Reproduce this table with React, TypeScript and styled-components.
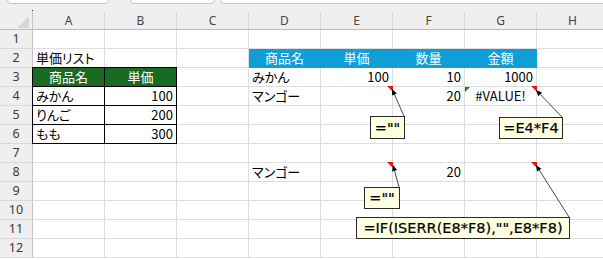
import React from 'react';
import styled, { createGlobalStyle } from 'styled-components';

const GlobalStyle = createGlobalStyle`
  html, body {
    margin: 0;
    padding: 0;
    background: #ffffff;
  }
  body {
    width: 603px;
    height: 260px;
    overflow: hidden;
    font-family: "Noto Sans CJK JP", sans-serif;
  }
`;

const GRID = '#dedede';
const HEAD_LINE = '#c6c6c6';
const HEAD_BG = '#efefef';

const Window = styled.div`
  position: relative;
  width: 603px;
  height: 260px;
  overflow: hidden;
  background: #ffffff;
`;

const TopStrip = styled.div`
  display: flex;
  height: 4px;
  background: ${HEAD_BG};
  overflow: hidden;
`;

const BarBox = styled.div<{ $w: number; $ml: number }>`
  flex: none;
  width: ${(p) => p.$w}px;
  height: 12px;
  margin-top: -8px;
  margin-left: ${(p) => p.$ml}px;
  box-sizing: border-box;
  border: 1px solid #c4c4c4;
  border-radius: 4px;
  background: #ffffff;
`;

const HeaderBar = styled.div`
  display: flex;
  align-items: flex-end;
  height: 26px;
  box-sizing: border-box;
  background: ${HEAD_BG};
  border-bottom: 1px solid #b9b9b9;
`;

const Corner = styled.div`
  position: relative;
  flex: none;
  width: 33px;
  height: 17px;
  box-sizing: border-box;
  border-right: 1px solid ${HEAD_LINE};
  display: flex;
  justify-content: flex-end;
  align-items: flex-end;
  padding: 0 3px 1px 0;

  &::before {
    content: '';
    position: absolute;
    right: -1px;
    top: -2px;
    width: 1px;
    height: 1px;
    background: #222;
  }
`;

const CornerMark = styled.div`
  width: 0;
  height: 0;
  border-left: 12px solid transparent;
  border-bottom: 12px solid #d6d6d6;
`;

const ColHead = styled.div`
  flex: none;
  width: 72px;
  height: 17px;
  box-sizing: border-box;
  border-right: 1px solid #d8d8d8;
  text-align: center;
  font-family: "Noto Sans", sans-serif;
  font-size: 12px;
  line-height: 17px;
  color: #444444;
`;

const SheetRow = styled.div`
  display: flex;
  height: 19px;
`;

const RowHead = styled.div`
  flex: none;
  width: 33px;
  height: 19px;
  box-sizing: border-box;
  background: ${HEAD_BG};
  border-right: 1px solid ${HEAD_LINE};
  border-bottom: 1px solid #d9d9d9;
  text-align: center;
  font-family: "Noto Sans", sans-serif;
  font-size: 12.5px;
  line-height: 18px;
  color: #3a3a3a;
`;

type Align = 'left' | 'center' | 'right';

const Cell = styled.div<{
  $align: Align;
  $fill?: string;
  $ink?: string;
  $boxed?: boolean;
  $note?: boolean;
  $err?: boolean;
}>`
  position: relative;
  flex: none;
  width: 72px;
  height: 19px;
  box-sizing: border-box;
  padding: 0 3px;
  border-right: 1px solid ${(p) => (p.$boxed ? '#000' : p.$fill ?? GRID)};
  border-bottom: 1px solid ${(p) => (p.$boxed ? '#000' : p.$fill ?? GRID)};
  box-shadow: ${(p) =>
    p.$boxed ? '-1px 0 0 #000, 0 -1px 0 #000, -1px -1px 0 #000' : 'none'};
  background: ${(p) => p.$fill ?? 'transparent'};
  color: ${(p) => p.$ink ?? '#000000'};
  text-align: ${(p) => p.$align};
  font-size: 13px;
  line-height: 18px;
  font-feature-settings: "palt";
  white-space: nowrap;

  &::before {
    content: '';
    display: ${(p) => (p.$err ? 'block' : 'none')};
    position: absolute;
    left: 0;
    top: 0;
    width: 0;
    height: 0;
    border-top: 5px solid #1d7f25;
    border-right: 5px solid transparent;
  }

  &::after {
    content: '';
    display: ${(p) => (p.$note ? 'block' : 'none')};
    position: absolute;
    right: -1px;
    top: -1px;
    width: 0;
    height: 0;
    border-top: 6px solid #e8120c;
    border-left: 6px solid transparent;
  }
`;

const NoteBox = styled.div<{ $x: number; $y: number; $w: number; $h: number }>`
  position: absolute;
  left: ${(p) => p.$x}px;
  top: ${(p) => p.$y}px;
  width: ${(p) => p.$w}px;
  height: ${(p) => p.$h}px;
  box-sizing: border-box;
  border: 1px solid #2a2a2a;
  background: #ffffe1;
  display: flex;
  align-items: center;
  justify-content: center;
  font-family: "DejaVu Sans", sans-serif;
  font-size: 14.5px;
  color: #000;
  -webkit-text-stroke: 0.2px #000;
  white-space: nowrap;
`;

const Leaders = styled.svg`
  position: absolute;
  left: 0;
  top: 0;
  width: 603px;
  height: 260px;
  pointer-events: none;
`;

type Spec = {
  t?: string;
  align?: Align;
  fill?: string;
  ink?: string;
  boxed?: boolean;
  note?: boolean;
  err?: boolean;
};

const GREEN = '#196b24';
const BLUE = '#0f9ed5';

const head = (t: string, fill: string, boxed = false): Spec => ({
  t,
  align: 'center',
  fill,
  ink: '#ffffff',
  boxed,
});
const num = (t: string, boxed = false): Spec => ({ t, align: 'right', boxed });
const txt = (t: string, boxed = false): Spec => ({ t, boxed });

const columns = ['A', 'B', 'C', 'D', 'E', 'F', 'G', 'H'];

const rows: Record<number, Record<string, Spec>> = {
  2: {
    A: txt('単価リスト'),
    D: head('商品名', BLUE),
    E: head('単価', BLUE),
    F: head('数量', BLUE),
    G: head('金額', BLUE),
  },
  3: {
    A: head('商品名', GREEN, true),
    B: head('単価', GREEN, true),
    D: txt('みかん'),
    E: num('100'),
    F: num('10'),
    G: num('1000'),
  },
  4: {
    A: txt('みかん', true),
    B: num('100', true),
    D: txt('マンゴー'),
    E: { note: true },
    F: num('20'),
    G: { t: '#VALUE!', align: 'center', err: true, note: true },
  },
  5: { A: txt('りんご', true), B: num('200', true) },
  6: { A: txt('もも', true), B: num('300', true) },
  8: {
    D: txt('マンゴー'),
    E: { note: true },
    F: num('20'),
    G: { note: true },
  },
};

const notes = [
  { x: 370, y: 116, w: 35, h: 23, text: '=""' },
  { x: 499, y: 117, w: 64, h: 22, text: '=E4*F4' },
  { x: 364, y: 187, w: 36, h: 22, text: '=""' },
  { x: 356, y: 217, w: 214, h: 22, text: '=IF(ISERR(E8*F8),"",E8*F8)' },
];

const leaders = [
  { x1: 404, y1: 116, x2: 392, y2: 89 },
  { x1: 562, y1: 117, x2: 536, y2: 90 },
  { x1: 399, y1: 187, x2: 393, y2: 165 },
  { x1: 569, y1: 217, x2: 536, y2: 165 },
];

function Leader({ x1, y1, x2, y2 }: { x1: number; y1: number; x2: number; y2: number }) {
  const dx = x2 - x1;
  const dy = y2 - y1;
  const len = Math.hypot(dx, dy);
  const ux = dx / len;
  const uy = dy / len;
  const bx = x2 - ux * 6;
  const by = y2 - uy * 6;
  const pts = [
    `${x2},${y2}`,
    `${bx - uy * 2.6},${by + ux * 2.6}`,
    `${bx + uy * 2.6},${by - ux * 2.6}`,
  ].join(' ');
  return (
    <g>
      <line x1={x1} y1={y1} x2={bx} y2={by} stroke="#4a4a4a" strokeWidth="1" />
      <polygon points={pts} fill="#000" />
    </g>
  );
}

export default function App() {
  return (
    <Window>
      <GlobalStyle />
      <TopStrip>
        <BarBox $w={102} $ml={7} />
        <BarBox $w={85} $ml={21} />
        <BarBox $w={420} $ml={5} />
      </TopStrip>
      <HeaderBar>
        <Corner>
          <CornerMark />
        </Corner>
        {columns.map((c) => (
          <ColHead key={c}>{c}</ColHead>
        ))}
      </HeaderBar>
      {Array.from({ length: 12 }, (_, i) => i + 1).map((r) => (
        <SheetRow key={r}>
          <RowHead>{r}</RowHead>
          {columns.map((c) => {
            const s = rows[r]?.[c] ?? {};
            return (
              <Cell
                key={c}
                $align={s.align ?? 'left'}
                $fill={s.fill}
                $ink={s.ink}
                $boxed={s.boxed}
                $note={s.note}
                $err={s.err}
              >
                {s.t}
              </Cell>
            );
          })}
        </SheetRow>
      ))}
      <Leaders viewBox="0 0 603 260">
        {leaders.map((l, i) => (
          <Leader key={i} {...l} />
        ))}
      </Leaders>
      {notes.map((n, i) => (
        <NoteBox key={i} $x={n.x} $y={n.y} $w={n.w} $h={n.h}>
          {n.text}
        </NoteBox>
      ))}
    </Window>
  );
}
